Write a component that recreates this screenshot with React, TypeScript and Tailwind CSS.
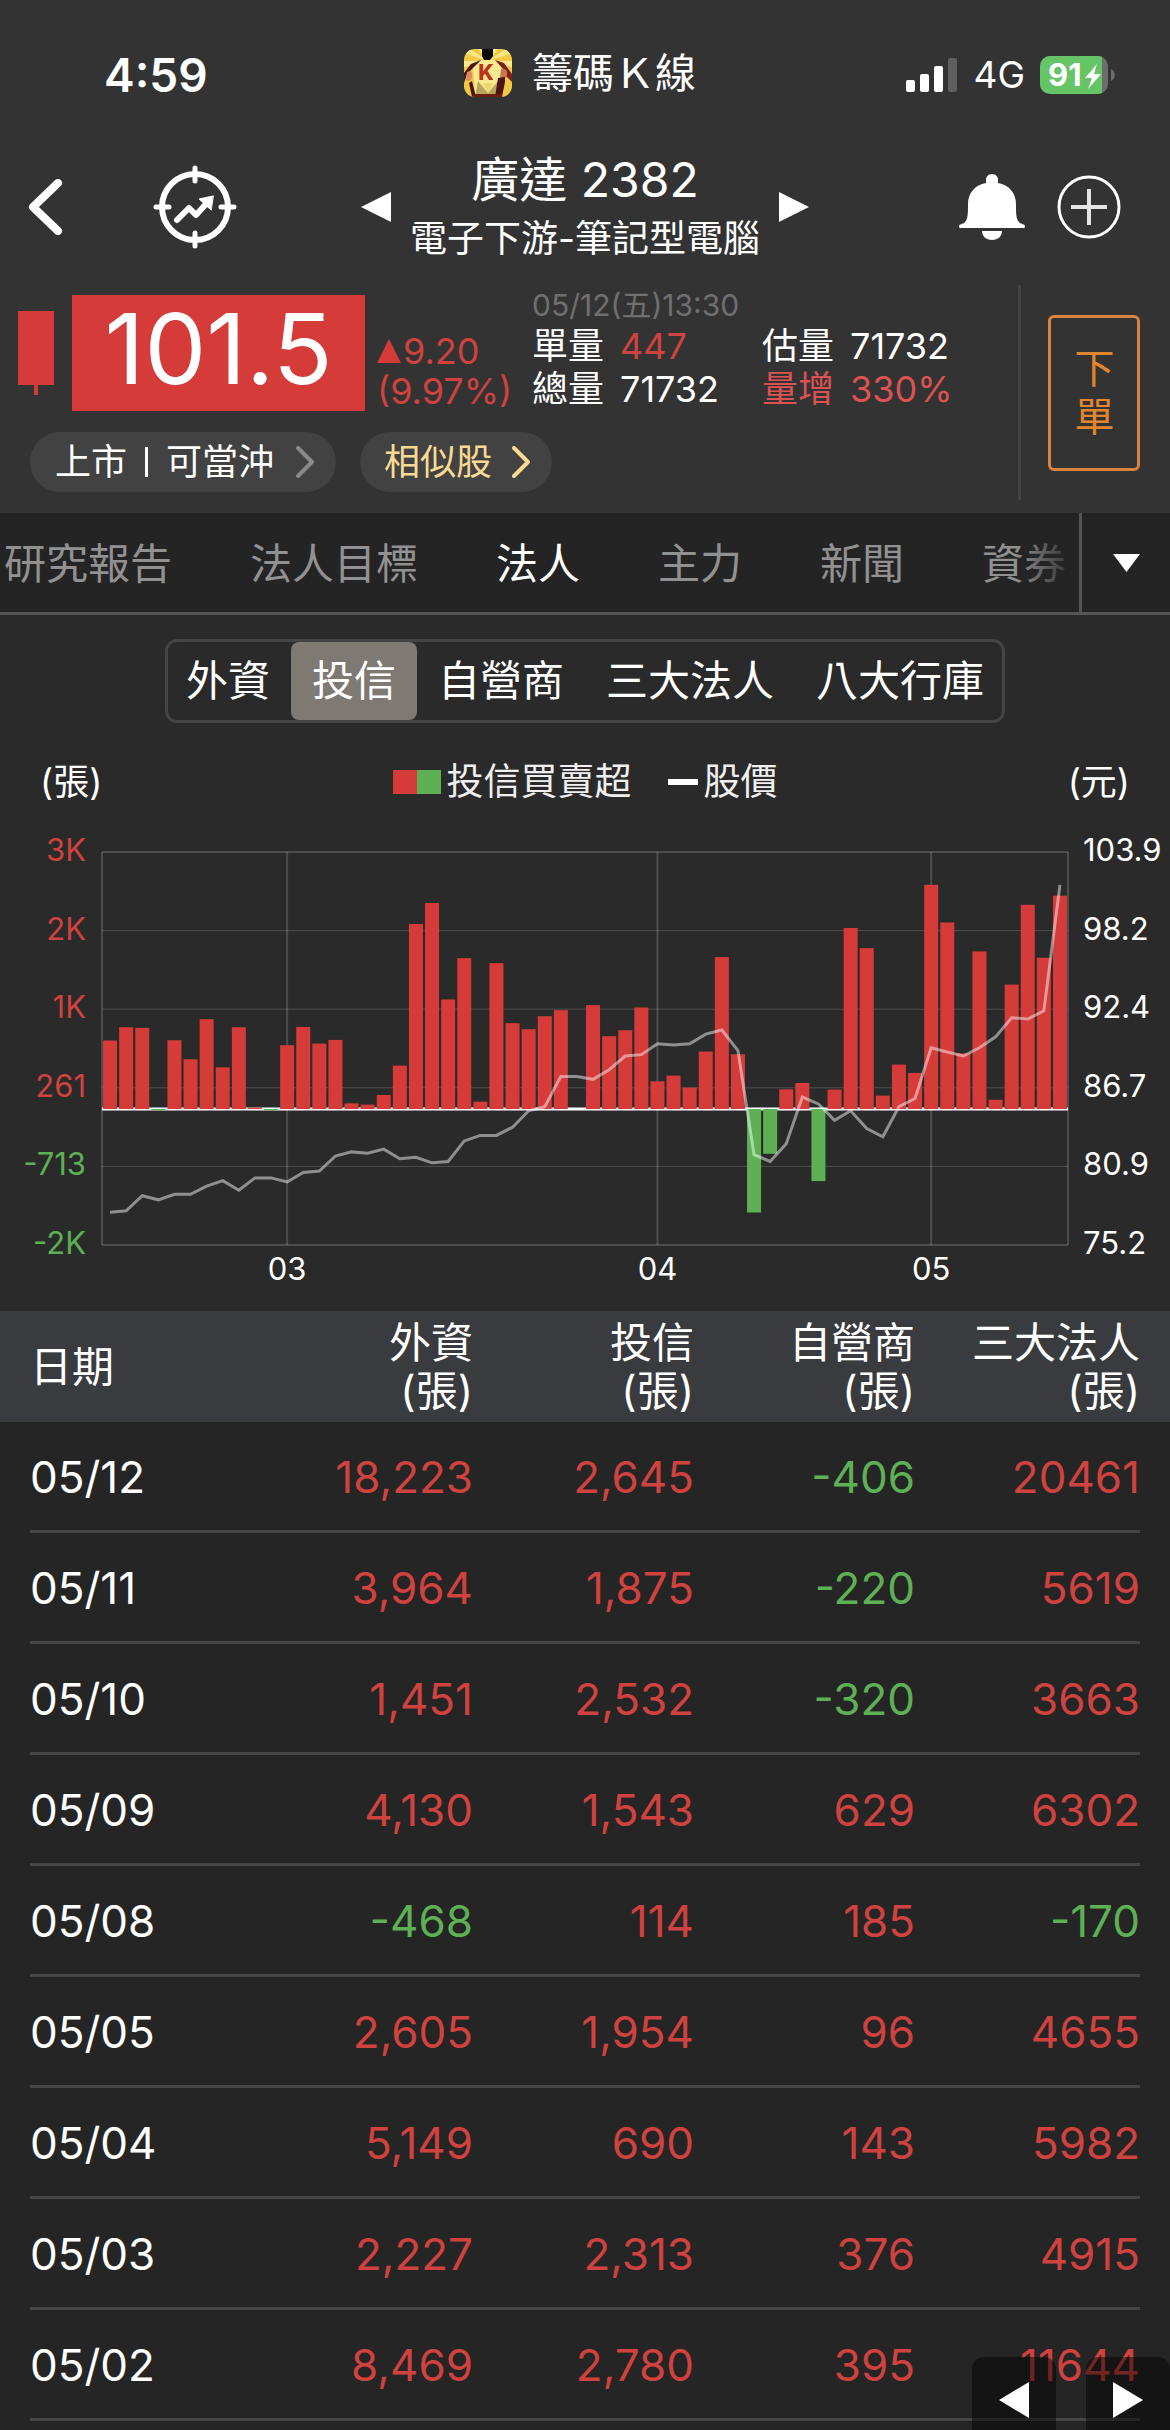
import React, { useState } from 'react';
import clsx from 'clsx';

interface InstitutionRow {
  date: string;
  foreign: string;
  trust: string;
  dealer: string;
  total: string;
}

const TABS = ['研究報告', '法人目標', '法人', '主力', '新聞', '資券'];
const SEGMENTS = ['外資', '投信', '自營商', '三大法人', '八大行庫'];

const ROWS: InstitutionRow[] = [
  { date: '05/12', foreign: '18,223', trust: '2,645', dealer: '-406', total: '20461' },
  { date: '05/11', foreign: '3,964', trust: '1,875', dealer: '-220', total: '5619' },
  { date: '05/10', foreign: '1,451', trust: '2,532', dealer: '-320', total: '3663' },
  { date: '05/09', foreign: '4,130', trust: '1,543', dealer: '629', total: '6302' },
  { date: '05/08', foreign: '-468', trust: '114', dealer: '185', total: '-170' },
  { date: '05/05', foreign: '2,605', trust: '1,954', dealer: '96', total: '4655' },
  { date: '05/04', foreign: '5,149', trust: '690', dealer: '143', total: '5982' },
  { date: '05/03', foreign: '2,227', trust: '2,313', dealer: '376', total: '4915' },
  { date: '05/02', foreign: '8,469', trust: '2,780', dealer: '395', total: '11644' },
];

const HEADINGS = ['外資', '投信', '自營商', '三大法人'];

// Net buy/sell of the last 60 sessions, oldest first
const NET_BUY = [
  849, 1014, 1006, -14, 853, 617, 1114, 517, 1014, 16, -14, 791, 1018, 811, 857,
  70, 54, 174, 538, 2294, 2554, 1358, 1871, 91, 1809, 1064, 989, 1151, 1225, 0,
  1288, 903, 977, 1259, 344, 414, 265, 712, 1884, 679, -1283, -555, 244, 323, -894,
  240, 2244, 1995, 166, 551, 447, 2780, 2313, 690, 1954, 114, 1543, 2532, 1875, 2645,
];

const PRICES = [
  77.6, 77.7, 78.8, 78.5, 78.9, 78.9, 79.5, 79.9, 79.2, 80.1, 80.1, 79.8, 80.5, 80.6, 81.7,
  82.0, 81.9, 82.2, 81.5, 81.6, 81.2, 81.3, 82.8, 83.2, 83.2, 83.8, 85.0, 85.3, 87.5, 87.5,
  87.3, 88.0, 89.0, 89.1, 89.9, 89.8, 89.9, 90.6, 90.9, 89.4, 81.8, 81.3, 82.6, 86.0, 85.5,
  84.3, 85.0, 83.7, 83.1, 85.3, 85.9, 89.6, 89.3, 89.0, 89.6, 90.4, 91.8, 91.7, 92.3, 101.5,
];

const LEFT_AXIS = ['3K', '2K', '1K', '261', '-713', '-2K'];
const RIGHT_AXIS = ['103.9', '98.2', '92.4', '86.7', '80.9', '75.2'];
const MONTHS = [
  { label: '03', index: 11 },
  { label: '04', index: 34 },
  { label: '05', index: 51 },
];

const PLOT = { left: 102, right: 1068, top: 22, bottom: 415, zero: 279 };
const STEP = (PLOT.right - PLOT.left) / NET_BUY.length;
const LOTS_PER_PX = 12.4;

const barCenter = (i: number) => PLOT.left + STEP * (i + 0.5);
const gridY = (i: number) => PLOT.top + ((PLOT.bottom - PLOT.top) * i) / 5;
const priceY = (p: number) => PLOT.top + ((103.9 - p) / 28.7) * (PLOT.bottom - PLOT.top);

const signColor = (value: string) => (value.startsWith('-') ? 'text-[#5eb055]' : 'text-[#cf423f]');

const AppIcon = () => (
  <svg viewBox="0 0 48 48" className="size-12" aria-hidden="true">
    <defs>
      <clipPath id="icon-clip">
        <rect width="48" height="48" rx="11" />
      </clipPath>
    </defs>
    <g clipPath="url(#icon-clip)">
      <rect width="48" height="48" fill="#f1c945" />
      <path d="M24 12 0 4V0h6zM24 12 14 0h6zM24 12 48 4V0h-6zM24 12 34 0h-6zM24 12 0 18v-6zM24 12l24 6v-6z" fill="#fbe98a" />
      <path d="M17 11 31 11 39 18 36 46H11L9 18z" fill="#f8ea8e" />
      <path d="M14 32 24 44 34 32 35 48H11z" fill="#b9a65c" />
      <path d="M19 34h10l-5 10z" fill="#ecd873" />
      <path d="M18 0h11v7l-3 4h-6l-2-4z" fill="#0d0b09" />
      <path d="M17 11 7 15 0 24v10l3-9 7-7z" fill="#4a1513" />
      <path d="M31 11 40 14l8 11v8l-6-6-3-7z" fill="#7d1f1a" />
      <path d="M3 23c4-2 6 1 5 5s-4 5-6 3z" fill="#d98a5e" />
      <path d="M37 20c4-1 7 2 6 6s-4 6-7 3z" fill="#c9764f" />
      <path d="M8 32 12 48H8L5 34zM34 29l7-1v5l-3 15h-7z" fill="#4a1513" />
      <path d="M10 45h28v3H10z" fill="#6d1d15" />
    </g>
    <text x="22" y="31" textAnchor="middle" fontSize="21" fontWeight="800" fill="#c02f1d">K</text>
  </svg>
);

const SignalIcon = () => (
  <svg viewBox="0 0 52 34" className="h-[34px] w-[52px]" aria-hidden="true">
    <rect x="0" y="22" width="9" height="12" rx="2" fill="#fff" />
    <rect x="14" y="16" width="9" height="18" rx="2" fill="#fff" />
    <rect x="28" y="8" width="9" height="26" rx="2" fill="#fff" />
    <rect x="42" y="0" width="9" height="34" rx="2" fill="#5f5f5f" />
  </svg>
);

const BatteryIcon = () => (
  <svg viewBox="0 0 76 38" className="h-[38px] w-[76px]" role="img" aria-label="91%">
    <defs>
      <clipPath id="battery-clip">
        <rect width="68" height="38" rx="10" />
      </clipPath>
    </defs>
    <g clipPath="url(#battery-clip)">
      <rect width="68" height="38" fill="#6c6c6c" />
      <rect width="62" height="38" fill="#65c466" />
    </g>
    <path d="M71 13c5 2 5 10 0 12z" fill="#6c6c6c" />
    <text x="8" y="30" fontSize="31" fontWeight="700" fill="#fff">91</text>
    <path d="M57 8 45 22h7l-4 11 13-15h-7z" fill="#fff" />
  </svg>
);

const TargetIcon = () => (
  <svg viewBox="0 0 84 84" className="size-[84px]" fill="none" stroke="#fff" strokeLinecap="round" aria-hidden="true">
    <circle cx="42" cy="42" r="33" strokeWidth="6" />
    <path d="M42 3v13M42 68v13M3 42h13M68 42h13" strokeWidth="5" />
    <path d="m24 55 12-12 7 7 10-11" strokeWidth="6" strokeLinejoin="round" />
    <path d="M60 31 46 34l12 11z" fill="#fff" strokeWidth="1" strokeLinejoin="round" />
  </svg>
);

const BellIcon = () => (
  <svg viewBox="0 0 66 66" className="size-[66px]" fill="#fff" aria-hidden="true">
    <path d="M33 0c4 0 6 3 6 6v3c11 2 18 10 18 21 0 9 0 15 3 18 1 2 6 2 6 4 0 1 0 2-1 2H1c-1 0-1-1-1-2 0-2 5-2 6-4 3-3 3-9 3-18C9 19 16 11 27 9V6c0-3 2-6 6-6z" />
    <path d="M23 57h20c0 5-4 9-10 9s-10-4-10-9z" />
  </svg>
);

const PlusCircleIcon = () => (
  <svg viewBox="0 0 64 64" className="size-16" fill="none" stroke="#fff" aria-hidden="true">
    <circle cx="32" cy="32" r="30" strokeWidth="3" />
    <path d="M32 14v36M14 32h36" strokeWidth="4" stroke="#e4e4e4" />
  </svg>
);

const Triangle = ({ direction, className }: { direction: 'left' | 'right' | 'down'; className: string }) => (
  <svg viewBox="0 0 30 30" preserveAspectRatio="none" className={className} fill="#fff" aria-hidden="true">
    {direction === 'left' && <path d="M30 0v30L0 15z" />}
    {direction === 'right' && <path d="M0 0v30l30-15z" />}
    {direction === 'down' && <path d="M0 0h30L15 30z" />}
  </svg>
);

const PillChevron = ({ className }: { className: string }) => (
  <svg viewBox="0 0 18 32" className={clsx('h-8 w-[18px]', className)} fill="none" stroke="currentColor" strokeWidth="4" strokeLinecap="round" strokeLinejoin="round" aria-hidden="true">
    <path d="m2 2 14 14L2 30" />
  </svg>
);

const NetBuyChart = () => (
  <svg viewBox="0 0 1170 470" className="block w-full" role="img" aria-label="投信買賣超">
    {/* Grid */}
    <g stroke="#fff" strokeOpacity="0.17">
      {LEFT_AXIS.map((label, i) => (
        <path key={label} d={`M${PLOT.left} ${gridY(i)}H${PLOT.right}`} strokeWidth={i === 0 || i === 5 ? 2 : 1} />
      ))}
      <path d={`M${PLOT.left} ${PLOT.top}V${PLOT.bottom}M${PLOT.right} ${PLOT.top}V${PLOT.bottom}`} strokeWidth="2" />
      {MONTHS.map(({ label, index }) => (
        <path key={label} d={`M${barCenter(index)} ${PLOT.top}V${PLOT.bottom}`} strokeWidth="2" />
      ))}
    </g>

    {/* Zero line and bars */}
    <path d={`M${PLOT.left} ${PLOT.zero}H${PLOT.right}`} stroke="#fff" strokeWidth="3" />
    {NET_BUY.map((value, i) => (
      <rect
        key={i}
        x={barCenter(i) - 7}
        y={value >= 0 ? PLOT.zero - value / LOTS_PER_PX : PLOT.zero}
        width="14"
        height={Math.abs(value) / LOTS_PER_PX}
        fill={value >= 0 ? '#d53b38' : '#5eb055'}
      />
    ))}

    {/* Price */}
    <polyline
      points={PRICES.map((p, i) => `${barCenter(i)},${priceY(p)}`).join(' ')}
      fill="none"
      stroke="#fff"
      strokeOpacity="0.48"
      strokeWidth="3"
    />

    {/* Axis labels */}
    <g fontSize="31">
      {LEFT_AXIS.map((label, i) => (
        <text key={label} x="86" y={gridY(i) + 9} textAnchor="end" fill={i < 4 ? '#cf423f' : '#5eb055'}>
          {label}
        </text>
      ))}
      {RIGHT_AXIS.map((label, i) => (
        <text key={label} x="1083" y={gridY(i) + 9} fill="#fff">
          {label}
        </text>
      ))}
      {MONTHS.map(({ label, index }) => (
        <text key={label} x={barCenter(index)} y="450" textAnchor="middle" fill="#fff">
          {label}
        </text>
      ))}
    </g>
  </svg>
);

const App: React.FC = () => {
  const [tab, setTab] = useState('法人');
  const [segment, setSegment] = useState('投信');

  return (
    <div className="relative min-h-screen overflow-hidden bg-[#252525] font-['Inter','Noto_Sans_CJK_TC',sans-serif] text-white">
      <header className="bg-[#333333]">
        {/* Status bar */}
        <div className="grid grid-cols-[1fr_auto_1fr] items-center pt-11 leading-[58px]">
          <span className="pl-[104px] text-[46px] font-semibold">4:59</span>
          <div className="flex items-center gap-5 pb-1 pr-2.5 text-[41px]">
            <AppIcon />
            <span>籌碼Ｋ線</span>
          </div>
          <div className="flex items-center justify-end pr-[54px]">
            <SignalIcon />
            <span className="mx-[15px] text-[37px]">4G</span>
            <BatteryIcon />
          </div>
        </div>

        {/* Stock title */}
        <div className="grid grid-cols-[1fr_auto_1fr] items-center pt-11">
          <div className="flex items-center gap-[90px] pb-1 pl-7">
            <button aria-label="返回">
              <svg viewBox="0 0 35 56" className="h-14 w-[35px]" fill="none" stroke="#fff" strokeWidth="8" strokeLinecap="round" strokeLinejoin="round">
                <path d="M30 4 5 28l25 24" />
              </svg>
            </button>
            <button aria-label="選股">
              <TargetIcon />
            </button>
          </div>
          <div className="flex items-center gap-[19px]">
            <button aria-label="上一檔" className="pb-1">
              <Triangle direction="left" className="size-[30px]" />
            </button>
            <div className="text-center">
              <h1 className="text-[48px] leading-[60px]">廣達 2382</h1>
              <p className="text-[37px] leading-[58px]">電子下游-筆記型電腦</p>
            </div>
            <button aria-label="下一檔" className="pb-1">
              <Triangle direction="right" className="size-[30px]" />
            </button>
          </div>
          <div className="flex items-center justify-end gap-8 pb-1 pr-[49px]">
            <button aria-label="通知">
              <BellIcon />
            </button>
            <button aria-label="加入自選">
              <PlusCircleIcon />
            </button>
          </div>
        </div>

        {/* Quote */}
        <div className="flex pb-[13px] pt-[17px]">
          <div className="flex-1 pb-2">
            <div className="flex items-end pl-[18px]">
              <svg viewBox="0 0 36 84" className="mb-4 h-[84px] w-9" fill="#d53b38" aria-hidden="true">
                <path d="M0 0h36v74H20v10h-4V74H0z" />
              </svg>
              <div className="ml-[18px] h-[116px] w-[293px] bg-[#d53b38] text-center text-[98px] leading-[108px]">101.5</div>
              <div className="ml-3 w-[155px] text-[36px] leading-10 text-[#cf423f]">
                <p className="flex items-center gap-0.5">
                  <svg viewBox="0 0 24 24" className="size-6" fill="#d53b38" aria-hidden="true">
                    <path d="M12 0 24 24H0z" />
                  </svg>
                  9.20
                </p>
                <p>(9.97%)</p>
              </div>
              <div className="text-[36px] leading-[43px]">
                <p className="text-[30px] leading-10 text-[#6f6f6f]">05/12(五)13:30</p>
                <dl className="grid grid-cols-[230px_auto]">
                  <div className="flex gap-4">
                    <dt>單量</dt>
                    <dd className="text-[#cf423f]">447</dd>
                  </div>
                  <div className="flex gap-4">
                    <dt>估量</dt>
                    <dd>71732</dd>
                  </div>
                  <div className="flex gap-4">
                    <dt>總量</dt>
                    <dd>71732</dd>
                  </div>
                  <div className="flex gap-4 text-[#dc5252]">
                    <dt>量增</dt>
                    <dd>330%</dd>
                  </div>
                </dl>
              </div>
            </div>
            <div className="mt-[21px] flex gap-6 pl-[30px] text-[36px] leading-[60px]">
              <button className="flex items-center gap-[22px] rounded-full bg-[#424242] pl-[25px] pr-[22px]">
                <span className="flex items-center gap-[18px]">
                  上市
                  <i className="h-[30px] w-[3px] bg-white" />
                  可當沖
                </span>
                <PillChevron className="text-[#8a8a8a]" />
              </button>
              <button className="flex items-center gap-5 rounded-full bg-[#424242] pl-6 pr-[22px] text-[#f9da94]">
                相似股
                <PillChevron className="text-[#f9da94]" />
              </button>
            </div>
          </div>
          <div className="flex w-[152px] items-center justify-center border-l-3 border-[#444444] pr-1">
            <button className="h-[156px] w-[92px] rounded-md border-3 border-[#d68440] px-6 text-[40px] leading-12 text-[#e2852f]">
              下單
            </button>
          </div>
        </div>
      </header>

      {/* Tabs */}
      <nav className="flex border-b-3 border-[#545454] bg-[#242424] leading-[97px]">
        <div className="relative min-w-0 flex-1 overflow-hidden pt-0.5">
          <div className="flex gap-[78px] whitespace-nowrap pl-1 text-[42px]">
            {TABS.map(name => (
              <button key={name} onClick={() => setTab(name)} className={clsx('shrink-0', name === tab ? 'text-white' : 'text-[#919191]')}>
                {name}
              </button>
            ))}
          </div>
          <div className="pointer-events-none absolute inset-y-0 right-0 w-16 bg-linear-to-r from-transparent to-[#242424]" />
        </div>
        <button aria-label="更多" className="flex w-[91px] items-center justify-center border-l-3 border-[#545454]">
          <Triangle direction="down" className="h-[18px] w-[27px]" />
        </button>
      </nav>

      {/* Chart */}
      <section className="bg-[#2a2a2a] pt-6">
        <div className="flex justify-center">
          <div className="flex rounded-xl border-3 border-[#444444] text-[42px] leading-[78px]">
            {SEGMENTS.map(name => (
              <button
                key={name}
                onClick={() => setSegment(name)}
                className={clsx('rounded-lg px-[21px] first:pl-[18px] last:pr-[18px]', name === segment && 'bg-[#7f7974]')}
              >
                {name}
              </button>
            ))}
          </div>
        </div>
        <div className="mt-[29px] grid grid-cols-[1fr_auto_1fr] px-10 text-[36px] leading-[60px]">
          <span>(張)</span>
          <div className="flex items-center text-[37px] text-[#f0f0f0]">
            <i className="size-6 bg-[#d53b38]" />
            <i className="mr-1.5 size-6 bg-[#5eb055]" />
            投信買賣超
            <i className="ml-9 mr-1.5 h-1.5 w-[30px] bg-white" />
            股價
          </div>
          <span className="text-right">(元)</span>
        </div>
        <div className="pb-[11px] pt-[18px]">
          <NetBuyChart />
        </div>
      </section>

      <table className="w-full table-fixed text-right">
        <thead className="bg-[#3a3b3e] text-[42px] leading-12">
          <tr className="h-[111px]">
            <th scope="col" className="w-[252px] pl-[30px] text-left font-normal">日期</th>
            {HEADINGS.map(name => (
              <th key={name} scope="col" className="whitespace-nowrap font-normal last:w-[255px] last:pr-[30px]">
                {name}
                <br />
                (張)
              </th>
            ))}
          </tr>
        </thead>
        <tbody className="text-[44px] leading-[111px]">
          {ROWS.map(row => (
            <tr
              key={row.date}
              className="bg-linear-to-r from-[#464646] to-[#464646] bg-size-[calc(100%-60px)_3px] bg-bottom bg-no-repeat"
            >
              <td className="pl-[30px] text-left">{row.date}</td>
              <td className={signColor(row.foreign)}>{row.foreign}</td>
              <td className={signColor(row.trust)}>{row.trust}</td>
              <td className={signColor(row.dealer)}>{row.dealer}</td>
              <td className={clsx('pr-[30px]', signColor(row.total))}>{row.total}</td>
            </tr>
          ))}
        </tbody>
      </table>

      {/* Floating pager */}
      <div className="absolute bottom-0 right-0 flex gap-[30px]">
        <button aria-label="上一頁" className="flex h-[73px] w-[84px] items-center justify-center rounded-t-xl bg-black/45 pt-3">
          <Triangle direction="left" className="h-9 w-[30px]" />
        </button>
        <button aria-label="下一頁" className="flex h-[73px] w-[84px] items-center justify-center rounded-t-xl bg-black/45 pt-3">
          <Triangle direction="right" className="h-9 w-[30px]" />
        </button>
      </div>
    </div>
  );
};

export default App;
